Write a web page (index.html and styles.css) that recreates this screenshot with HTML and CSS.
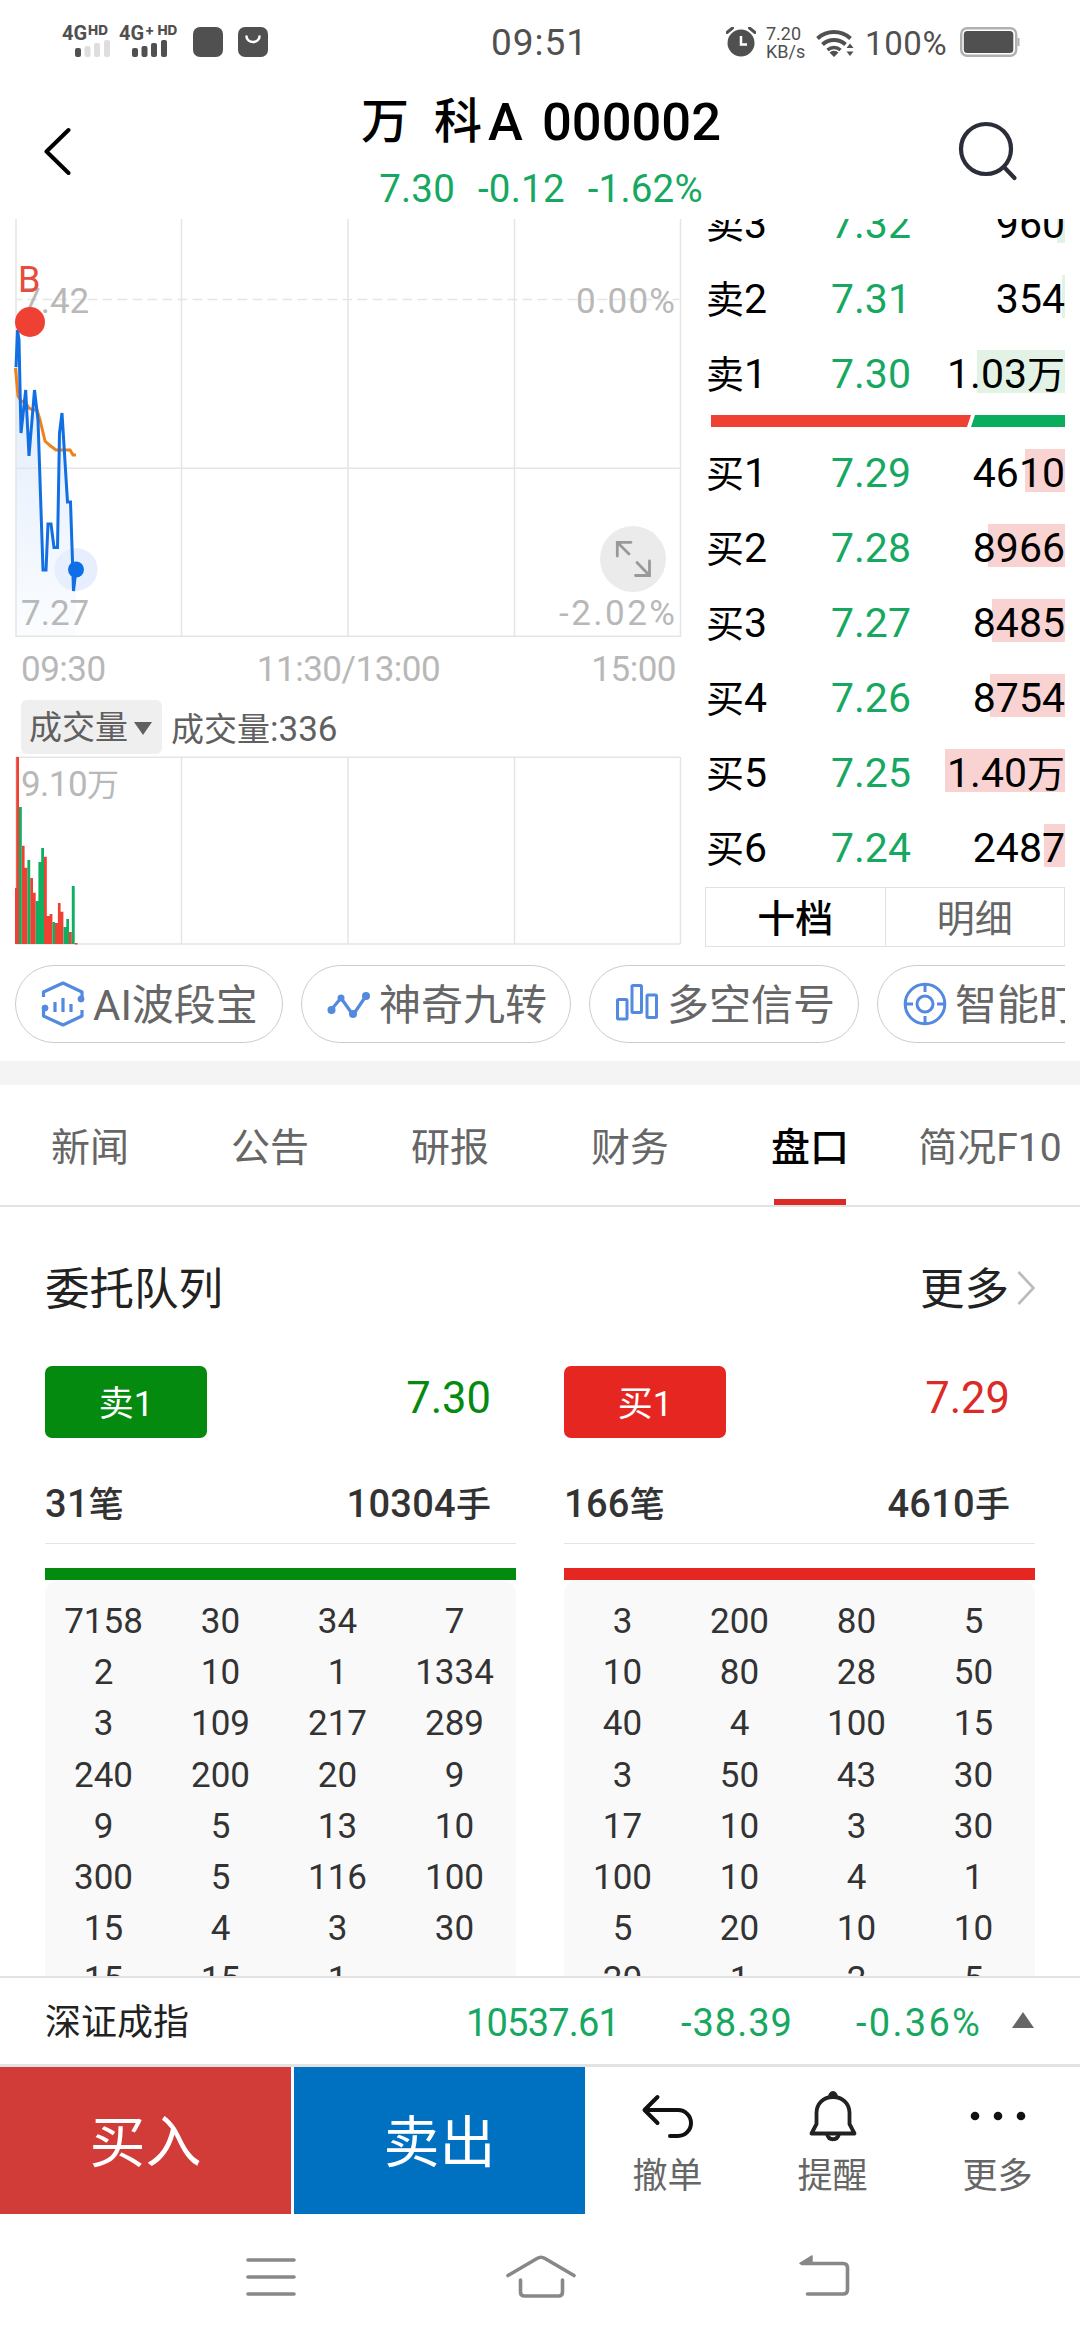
FILE: index.html
```html
<!DOCTYPE html>
<html lang="zh-CN">
<head>
<meta charset="utf-8">
<title>万科A 000002</title>
<link rel="stylesheet" href="styles.css">
</head>
<body>
<div class="status">
  <div class="sim sim1"><span class="net">4G<sup>HD</sup></span>
    <svg width="36" height="17" viewBox="0 0 36 17"><rect x="0" y="8" width="6" height="9" rx="2" fill="#505050"/><g fill="#dedede"><rect x="9.500" y="6" width="6" height="11" rx="2"/><rect x="19" y="3" width="6" height="14" rx="2"/><rect x="29" y="0" width="6" height="17" rx="2"/></g></svg></div>
  <div class="sim sim2"><span class="net">4G<sup>+</sup><sup>HD</sup></span>
    <svg width="36" height="17" viewBox="0 0 36 17" fill="#505050"><rect x="0" y="8" width="6" height="9" rx="2"/><rect x="9.500" y="6" width="6" height="11" rx="2"/><rect x="19" y="3" width="6" height="14" rx="2"/><rect x="29" y="0" width="6" height="17" rx="2"/></svg></div>
  <svg class="app1" width="30" height="30"><rect width="30" height="30" rx="7" fill="#505050"/></svg>
  <svg class="app2" width="30" height="30"><rect width="30" height="30" rx="7" fill="#505050"/><path d="M8.500 9.500a6.500 5.500 0 0 0 13 0" fill="none" stroke="#fff" stroke-width="2.500" stroke-linecap="round"/></svg>
  <span class="clock">09:51</span>
  <svg class="alarm" width="30" height="30" viewBox="0 0 30 30"><circle cx="15" cy="16" r="13.500" fill="#505050"/><path d="M1 5.500 6.500 1M29 5.500 23.500 1" stroke="#505050" stroke-width="3" stroke-linecap="round"/><path d="M15 9v8.500h6" fill="none" stroke="#fff" stroke-width="2.500"/></svg>
  <span class="speed"><span>7.20</span><span>KB/s</span></span>
  <svg class="wifi" width="40" height="30" viewBox="0 0 40 30"><g fill="none" stroke="#505050" stroke-width="4"><path d="M1.500 10.500a24.500 24.500 0 0 1 33 0"/><path d="M6.500 16.500a17 17 0 0 1 23 0"/><path d="M11.500 22a10 10 0 0 1 13 0" stroke-width="3.500"/></g><path d="M13.500 24.500a7 7 0 0 1 9 0L18 29zM30.500 20h7L34 15.500zM30.500 23.500h7L34 28z" fill="#505050"/></svg>
  <span class="pct">100%</span>
  <svg class="batt" width="60" height="30" viewBox="0 0 60 30"><rect x="1.200" y="1.200" width="55" height="27.600" rx="6" fill="none" stroke="#b0b0b0" stroke-width="2.400"/><rect x="3.800" y="4" width="49.500" height="22" rx="3.500" fill="#505050"/><path d="M58.500 11v8" stroke="#b0b0b0" stroke-width="2"/></svg>
</div>

<header class="header">
  <svg class="back" width="28" height="50" viewBox="0 0 28 50"><path d="M25.500 3 3.500 24.500 25.500 46" fill="none" stroke="#000" stroke-width="4" stroke-linecap="round" stroke-linejoin="round"/></svg>
  <div class="heading">
    <h1 class="title"><span>万</span><span>科</span><span>A</span><span>000002</span></h1>
    <div class="quote"><span>7.30</span><span>-0.12</span><span>-1.62%</span></div>
  </div>
  <svg class="search" width="60" height="60" viewBox="0 0 60 60" fill="none" stroke="#2b2d38" stroke-width="4.200" stroke-linecap="round"><circle cx="28" cy="28" r="25"/><path d="m46 46 10.500 11"/></svg>
</header>

<main class="market">
  <section class="charts">
    <div class="trend">
      <svg width="690" height="430" viewBox="0 219 690 430">
        <defs><linearGradient id="area" x1="0" y1="0" x2="0" y2="1"><stop offset="0" stop-color="#dce9fb"/><stop offset="1" stop-color="#fbfdff"/></linearGradient></defs>
        <path d="M16 637V367l1.500-37 1.500 10 2 93 4.700-43 3.300 66 5.500-66 3.500 30 5 150h3l2-46h3l3 23.500h3.500l2-114.500 2.500-20 5.500 89h3l3 89 2.500-22V637z" fill="url(#area)"/>
        <g stroke="#e5e5e5" fill="none"><path d="M16 219v418M181.500 219v418M348 219v418M514.500 219v418M680.500 219v418M16 468.200h664M16 636.300h664" stroke-width="1.500"/><path d="M16.500 299.500h663" stroke-dasharray="9.700 5.300" stroke-dashoffset="4" stroke-width="1.500"/></g>
        <circle cx="76" cy="569.500" r="21.500" fill="#e7effe"/>
        <path d="M15.500 368 18 396l3 5 4 1 4 6 4 2h4l3 10 5 21 5 4.500 6 4.500h14l3 5h3" fill="none" stroke="#f0801a" stroke-width="3"/>
        <path d="m16 367 1.500-37 1.500 10 2 93 4.700-43 3.300 66 5.500-66 3.500 30 5 150h3l2-46h3l3 23.500h3.500l2-114.500 2.500-20 5.500 89h3l3 89 2.500-22" fill="none" stroke="#126fe3" stroke-width="3"/>
        <circle cx="76" cy="569.500" r="8" fill="#0d6fe8"/>
        <g class="axis"><text x="21" y="313">7.42</text><text x="21" y="625">7.27</text><text x="576" y="313" textLength="99">0.00%</text><text x="559" y="625" textLength="116">-2.02%</text></g>
        <circle cx="30" cy="322" r="15" fill="#ef4034"/><text x="18" y="292" class="buy-mark">B</text>
        <circle cx="633" cy="559" r="33" fill="#ebebeb"/>
        <path d="M631 542.300H617.300V556M618 543l11 11M635.500 575.500h14V561M649 575l-12-12.500" fill="none" stroke="#999" stroke-width="2.800" stroke-linecap="round"/>
      </svg>
    </div>
    <div class="times"><span>09:30</span><span>11:30/13:00</span><span>15:00</span></div>
    <div class="indicator"><span class="picker">成交量<i class="caret"></i></span><span class="vol">成交量<i>:336</i></span></div>
    <svg class="volume" width="690" height="190" viewBox="0 756 690 190">
      <path d="M16 757.300h664M16 944h664M16 757v187M181.500 757v187M348 757v187M514.500 757v187M680.500 757v187" fill="none" stroke="#e5e5e5" stroke-width="1.500"/>
      <path d="M15 888h1.500v56H15zM16.200 757H19v187h-2.800zM21.800 845.700h2.800v22h2.800V944h-5.600zM30.200 878H33v14.700h2.700V944h-5.500zM44 856.700h2.800V916h2.800v-2h2.800v30H44zM55 923h2.900v-20h2.700v8.700h2.800V944H55zM69 932h2.800v12H69zM74.800 943h2.800v1.500h-2.800z" fill="#ef4034"/>
      <path d="M19 807h2.800v137H19zM27.400 860h2.800v84h-2.800zM35.700 901h2.700v-39h2.800v-14H44v96h-8.300zM52.400 922H55v22h-2.600zM63.500 927h2.800v-8H69v25h-5.500zM71.800 886h2.900v58h-2.900z" fill="#0fae60"/>
      <text x="21" y="796" class="axis" textLength="98">9.10<tspan class="unit">万</tspan></text>
    </svg>
  </section>

  <section class="book">
    <div class="row first"><span>卖<i>3</i></span><b>7.32</b><em class="sell" style="--bar:8px">960</em></div>
    <div class="row"><span>卖<i>2</i></span><b>7.31</b><em class="sell" style="--bar:3px">354</em></div>
    <div class="row"><span>卖<i>1</i></span><b>7.30</b><em class="sell" style="--bar:88px">1.03<small>万</small></em></div>
    <svg class="ratio" width="354" height="12"><path d="M0 0h260l-4 12H0z" fill="#ef4034"/><path d="M264 0h90v12h-94z" fill="#0aac5d"/></svg>
    <div class="row"><span>买<i>1</i></span><b>7.29</b><em style="--bar:40px">4610</em></div>
    <div class="row"><span>买<i>2</i></span><b>7.28</b><em style="--bar:77px">8966</em></div>
    <div class="row"><span>买<i>3</i></span><b>7.27</b><em style="--bar:73px">8485</em></div>
    <div class="row"><span>买<i>4</i></span><b>7.26</b><em style="--bar:75px">8754</em></div>
    <div class="row"><span>买<i>5</i></span><b>7.25</b><em style="--bar:120px">1.40<small>万</small></em></div>
    <div class="row"><span>买<i>6</i></span><b>7.24</b><em style="--bar:21px">2487</em></div>
    <div class="toggle"><span class="on">十档</span><span>明细</span></div>
  </section>
</main>

<div class="pills">
  <div class="pill p1"><svg width="44" height="46" viewBox="0 0 44 46" fill="none" stroke="#5489e0" stroke-width="3.200"><path d="M2.500 16v-5L22 2l19 9v5M2.500 29v6L22 44l19-9v-6" stroke-linejoin="round"/><path d="M14 21v10M22 17v14M30 23v8"/><circle cx="40" cy="18" r="3" fill="#5489e0" stroke-width="1"/><circle cx="4" cy="27" r="3" fill="#5489e0" stroke-width="1"/></svg><span>AI波段宝</span></div>
  <div class="pill"><svg width="44" height="46" viewBox="0 0 44 46"><path d="M4 29 14 17l12 17L39 15" fill="none" stroke="#5489e0" stroke-width="3.200" stroke-linejoin="round"/><g fill="#5489e0"><circle cx="4.500" cy="29" r="4"/><circle cx="14" cy="17" r="3.500"/><circle cx="26" cy="33" r="4"/><circle cx="39" cy="15" r="4"/></g></svg><span>神奇九转</span></div>
  <div class="pill"><svg width="44" height="46" viewBox="0 0 44 46" fill="none" stroke="#5489e0" stroke-width="3"><rect x="2.500" y="18.500" width="9.500" height="19.500" rx="1"/><rect x="17" y="4.500" width="9.500" height="27" rx="1"/><rect x="32" y="14" width="9.500" height="22.500" rx="1"/></svg><span>多空信号</span></div>
  <div class="pill"><svg width="44" height="46" viewBox="0 0 44 46" fill="none" stroke="#5489e0" stroke-width="3"><circle cx="22" cy="23" r="19.800"/><circle cx="22" cy="23" r="8"/><path d="M22 3v8M22 35v8M2 23h8M34 23h8"/></svg><span>智能盯盘</span></div>
</div>

<nav class="tabs"><span>新闻</span><span>公告</span><span>研报</span><span>财务</span><span class="active">盘口</span><span>简况F10</span></nav>

<section class="queue">
  <div class="queue-head"><h2>委托队列</h2><span class="more">更多<svg width="18" height="34" viewBox="0 0 18 34"><path d="m1.500 1 15 16-15 16" fill="none" stroke="#bbb" stroke-width="2.600"/></svg></span></div>
  <div class="sides">
    <div class="side green">
      <div class="top"><span class="tag">卖1</span><span class="price">7.30</span></div>
      <div class="sum"><span><i>31</i>笔</span><span><i>10304</i>手</span></div>
      <div class="bar"></div>
      <div class="grid"><span>7158</span><span>30</span><span>34</span><span>7</span><span>2</span><span>10</span><span>1</span><span>1334</span><span>3</span><span>109</span><span>217</span><span>289</span><span>240</span><span>200</span><span>20</span><span>9</span><span>9</span><span>5</span><span>13</span><span>10</span><span>300</span><span>5</span><span>116</span><span>100</span><span>15</span><span>4</span><span>3</span><span>30</span><span>15</span><span>15</span><span>1</span></div>
    </div>
    <div class="side red">
      <div class="top"><span class="tag">买1</span><span class="price">7.29</span></div>
      <div class="sum"><span><i>166</i>笔</span><span><i>4610</i>手</span></div>
      <div class="bar"></div>
      <div class="grid"><span>3</span><span>200</span><span>80</span><span>5</span><span>10</span><span>80</span><span>28</span><span>50</span><span>40</span><span>4</span><span>100</span><span>15</span><span>3</span><span>50</span><span>43</span><span>30</span><span>17</span><span>10</span><span>3</span><span>30</span><span>100</span><span>10</span><span>4</span><span>1</span><span>5</span><span>20</span><span>10</span><span>10</span><span>20</span><span>1</span><span>2</span><span>5</span></div>
    </div>
  </div>
</section>

<div class="index"><span class="name">深证成指</span><span class="v1">10537.61</span><span class="v2">-38.39</span><span class="v3">-0.36%</span><i class="up"></i></div>

<footer class="trade">
  <div class="btn buy">买入</div><div class="btn sellbtn">卖出</div>
  <div class="act"><svg width="54" height="56" viewBox="0 0 54 56"><path d="M16.500 9 3.500 22 16.500 35M4 22h33a13 13 0 0 1 0 26H29" fill="none" stroke="#111" stroke-width="4" stroke-linecap="round" stroke-linejoin="round"/></svg><span>撤单</span></div>
  <div class="act"><svg width="54" height="56" viewBox="0 0 54 56" fill="none" stroke="#222" stroke-width="3.800" stroke-linejoin="round"><path d="M10.500 36V25c0-9 6.500-16 16.500-16s16.500 7 16.500 16v11l5 9.500H5.500z"/><path d="M24 9a3 4 0 0 1 6 0M21 46a6.200 7 0 0 0 12 0"/></svg><span>提醒</span></div>
  <div class="act"><svg width="56" height="56" viewBox="0 0 56 56" fill="#111"><circle cx="5" cy="28" r="4.300"/><circle cx="28" cy="28" r="4.300"/><circle cx="51" cy="28" r="4.300"/></svg><span>更多</span></div>
</footer>

<div class="sysnav">
  <svg width="1080" height="60" viewBox="0 2247 1080 60" fill="none" stroke="#888" stroke-width="3.600" stroke-linecap="round" stroke-linejoin="round"><path d="M248 2260h46M248 2277h46M248 2294h46"/><path d="m508 2275.500 29-17q4-2.500 8 0l29 17"/><path d="M520.500 2280v12q0 4 4 4h34q4 0 4-4v-12"/><path d="M802 2263.500h41q4.500 0 4.500 4.500v21.500q0 4.500-4.500 4.500H807.500"/><path d="m800 2263.500 12-7.500v7.500z" fill="#888" stroke-width="1.500"/></svg>
</div>
</body>
</html>
```
FILE: styles.css
```css
* { box-sizing: border-box; }
body {
  margin: 0;
  width: 1080px;
  height: 2340px;
  overflow: hidden;
  background: #fff;
  color: #000;
  font-family: Roboto, "Noto Sans CJK SC", sans-serif;
  display: flex;
  flex-direction: column;
}
body > * { flex: none; }
svg { display: block; flex: none; }
i, em { font-style: normal; }
b { font-weight: 400; }
span { white-space: nowrap; }

/* status bar */
.status { height: 85px; padding: 25px 0 0 62px; display: flex; align-items: flex-start; color: #505050; }
.sim { height: 32px; }
.sim1 { width: 57px; }
.sim2 { width: 74px; }
.sim svg { margin: -1px 0 0 13px; }
.net { display: flex; height: 16px; font-size: 20px; line-height: 16px; font-weight: 700; }
.net sup { font: 800 13.500px/10px Inter, sans-serif; margin-left: 1px; }
.net sup + sup { margin-left: 3px; }
.app1, .app2 { margin-top: 2px; }
.app2 { margin-left: 15px; }
.clock { width: 94px; margin-left: 223px; font-size: 37px; line-height: 35px; letter-spacing: 1px; }
.alarm { margin: 2px 0 0 141px; }
.speed { width: 50px; margin-left: 10px; display: flex; flex-direction: column; font-size: 18px; line-height: 17px; }
.speed span + span { margin-top: 1px; }
.wifi { margin-top: 3px; }
.pct { width: 95px; margin-left: 9px; font-size: 33px; line-height: 38px; letter-spacing: 0.6px; }
.batt { margin-top: 2px; }

/* header */
.header { height: 134px; padding: 0 60px 0 43px; display: flex; }
.back { margin-top: 42px; }
.search { margin: 36px 2px 0 auto; }
.heading { width: 400px; margin-left: 270px; display: flex; flex-direction: column; align-items: center; }
.title { margin: 7px 0 0; height: 60px; display: flex; font-size: 52.500px; line-height: 60px; font-weight: 500; }
.title span:nth-child(1) { width: 73px; font-size: 48px; }
.title span:nth-child(2) { width: 54px; font-size: 48px; }
.title span:nth-child(3) { width: 54px; }
.quote { display: flex; gap: 23px; color: #16a861; font-size: 38.500px; line-height: 44px; height: 44px; margin-top: 15px; letter-spacing: 0.2px; }

/* chart and order book */
.market { height: 731px; display: flex; overflow: hidden; }
.charts { width: 705px; display: flex; flex-direction: column; }
.trend { height: 430px; }
.axis { fill: #b8b8b8; font-size: 35px; }
.unit { font-size: 32px; }
.buy-mark { fill: #e74c3c; font-size: 36px; }
.times { height: 40px; padding: 0 29px 0 21px; display: flex; justify-content: space-between; color: #b8b8b8; font-size: 35px; line-height: 42px; letter-spacing: -0.5px; }
.indicator { height: 67px; padding: 11px 0 0 21px; display: flex; color: #606060; font-size: 33px; line-height: 59px; }
.indicator i { font-size: 35px; }
.picker { width: 141px; height: 54px; padding-left: 8px; border-radius: 6px; background: #efefef; display: flex; align-items: center; gap: 6px; }
.caret { border: 9px solid transparent; border-top: 13px solid #606060; border-bottom: 0; margin-top: 3px; }
.vol { margin-left: 9px; }
.volume { height: 190px; }

.book { width: 360px; display: flex; flex-direction: column; }
.row { height: 43px; margin-bottom: 32px; padding-left: 1px; display: flex; font-size: 41px; line-height: 48px; }
.row.first { margin-top: -19px; }
.row span { width: 115px; font-size: 38px; }
.row i { font-size: 41px; }
.row small { font-size: 38px; }
.row b { width: 100px; text-align: center; color: #16a861; }
.row em { flex: 1; text-align: right; background: linear-gradient(#f8d3d2, #f8d3d2) right / var(--bar) 100% no-repeat; }
.row em.sell { background-image: linear-gradient(#e2f2e4, #e2f2e4); }
.ratio { margin: -10px 0 22px 6px; }
.toggle { height: 60px; margin-top: -12px; border: 1.500px solid #e2e2e2; display: flex; font-size: 38px; line-height: 62px; text-align: center; color: #666; }
.toggle span { flex: 1; height: 58px; }
.toggle .on { color: #000; font-weight: 500; border-right: 1.500px solid #e2e2e2; }

/* tool pills */
.pills { height: 111px; margin-right: 15px; padding: 15px 0 0 15px; display: flex; gap: 18px; overflow: hidden; }
.pill { flex: none; width: 270px; height: 78px; padding-left: 25px; border: 1.500px solid #ccc; border-radius: 39px; display: flex; align-items: center; gap: 8px; font-size: 42px; line-height: 76px; color: #666; }
.pill span { padding-top: 3px; }
.p1 { width: 268px; }

/* tabs */
.tabs { height: 146px; border-top: 24px solid #f4f4f4; border-bottom: 2px solid #e3e3e3; display: flex; font-size: 39px; line-height: 126px; color: #666; }
.tabs span { width: 180px; height: 120px; text-align: center; }
.tabs .active { color: #000; font-weight: 500; background: linear-gradient(#dc2a26, #dc2a26) bottom / 72px 6px no-repeat; }

/* order queue */
.queue { height: 769px; padding: 0 45px; overflow: hidden; color: #222; }
.queue-head { height: 159px; padding-top: 53px; display: flex; justify-content: space-between; font-size: 44.500px; line-height: 60px; }
.queue-head h2 { margin: 0; font-size: inherit; font-weight: 400; }
.more { display: flex; align-items: center; gap: 8px; height: 60px; }
.more svg { margin-top: -5px; }
.sides { display: flex; gap: 48px; }
.side { width: 471px; }
.top { height: 72px; padding-right: 25px; display: flex; justify-content: space-between; }
.tag { width: 162px; height: 72px; border-radius: 7px; color: #fff; font-size: 35px; line-height: 78px; text-align: center; }
.price { font-size: 43.500px; line-height: 65px; }
.green .tag, .green .bar { background: #058a10; }
.red .tag, .red .bar { background: #e62721; }
.green .price { color: #058a10; }
.red .price { color: #dc2a26; }
.sum { height: 106px; padding: 44px 25px 0 0; border-bottom: 1.500px solid #e5e5e5; display: flex; justify-content: space-between; font-size: 35px; line-height: 44px; color: #333; font-weight: 500; }
.sum i { font-size: 38px; letter-spacing: 0.3px; }
.bar { height: 12px; margin-top: 24px; }
.grid { height: 420px; margin-top: 1px; padding-top: 14px; border-radius: 12px 12px 0 0; background: #f9f9f9; display: grid; grid-template-columns: repeat(4, 117px); grid-auto-rows: 51.200px; font-size: 35px; line-height: 53px; text-align: center; color: #333; align-content: start; }

/* index ticker */
.index { height: 91px; padding: 0 45px; border-top: 2px solid #e3e3e3; border-bottom: 3px solid #e3e3e3; display: flex; color: #16a861; font-size: 38px; line-height: 90px; }
.name { width: 421px; font-size: 36px; color: #222; }
.v1 { width: 215px; letter-spacing: -0.800px; }
.v2 { width: 175px; letter-spacing: 1px; }
.v3 { width: 156px; letter-spacing: 2.300px; }
.up { align-self: center; border: 11.500px solid transparent; border-top: 0; border-bottom: 16px solid #666; margin-top: -2px; }

/* trade buttons */
.trade { height: 147px; display: flex; }
.btn { width: 291px; height: 147px; color: #fff; font-size: 56px; line-height: 153px; text-align: center; }
.buy { background: #d13c38; margin-right: 3px; }
.sellbtn { background: #0070c0; }
.act { width: 165px; padding-top: 21px; display: flex; flex-direction: column; align-items: center; font-size: 35px; line-height: 44px; color: #666; }
.act span { margin-top: 11px; }
.sysnav { height: 125px; padding-top: 33px; }
```
